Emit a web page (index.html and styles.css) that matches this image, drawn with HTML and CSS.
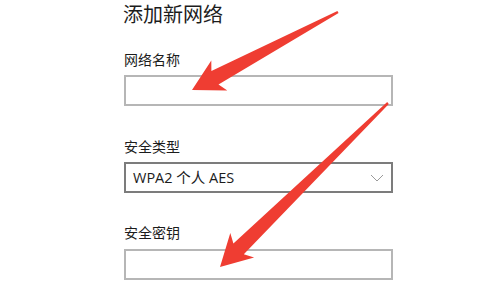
FILE: index.html
```html
<!DOCTYPE html>
<html lang="zh-CN">
<head>
<meta charset="utf-8">
<title>添加新网络</title>
<link rel="stylesheet" href="styles.css">
</head>
<body>
<div class="page">
  <div class="form">
    <h1 class="title">添加新网络</h1>
    <div class="label label-first">网络名称</div>
    <div class="input"></div>
    <div class="label label-gap">安全类型</div>
    <div class="select">
      <span class="select-text">WPA2 个人 AES</span>
      <svg class="chevron" width="14" height="8" viewBox="0 0 14 8"><path d="M1 1 L7 7 L13 1" fill="none" stroke="#9a9a9a" stroke-width="1"/></svg>
    </div>
    <div class="label label-gap2">安全密钥</div>
    <div class="input"></div>
  </div>
  <svg class="arrows" width="480" height="281" viewBox="0 0 480 281">
    <polygon fill="#ef3d32" points="192,90 211.3,60.4 211.4,71.1 337.4,10.9 338.6,13.1 218.5,84.4 227.3,90.4"/>
    <polygon fill="#ef3d32" points="220,267 230.3,233.1 233.4,243.5 387.2,102.1 388.8,103.9 243.8,254.2 254.1,257.5"/>
  </svg>
</div>
</body>
</html>
```
FILE: styles.css
```css
html, body {
  margin: 0;
  padding: 0;
  background: #ffffff;
}
.page {
  position: relative;
  width: 480px;
  height: 281px;
  overflow: hidden;
  font-family: "Noto Sans CJK SC", "Noto Sans", sans-serif;
  color: #1c1c1c;
}
.form {
  padding-left: 124px;
  width: 269px;
}
.title {
  margin: 0;
  font-size: 20px;
  font-weight: 400;
  line-height: 28px;
  height: 28px;
  margin-left: -1px;
}
.label {
  font-size: 14px;
  line-height: 20px;
  height: 20px;
  margin-bottom: 6px;
}
.label-first { margin-top: 21px; }
.label-gap { margin-top: 30px; }
.label-gap2 { margin-top: 29px; margin-bottom: 7px; }
.input {
  box-sizing: border-box;
  height: 31px;
  border: 2px solid #b6b6b6;
  background: #fff;
}
.select {
  box-sizing: border-box;
  height: 31px;
  border: 2px solid #7c7c7c;
  display: flex;
  align-items: center;
  justify-content: space-between;
  padding: 0 7px 0 7px;
}
.select-text {
  font-family: "Open Sans", "Noto Sans CJK SC", sans-serif;
  font-size: 14.5px;
  color: #1c1c1c;
  line-height: 20px;
}
.chevron {
  display: block;
  margin-top: 1px;
}
.arrows {
  position: absolute;
  left: 0;
  top: 0;
}
```
